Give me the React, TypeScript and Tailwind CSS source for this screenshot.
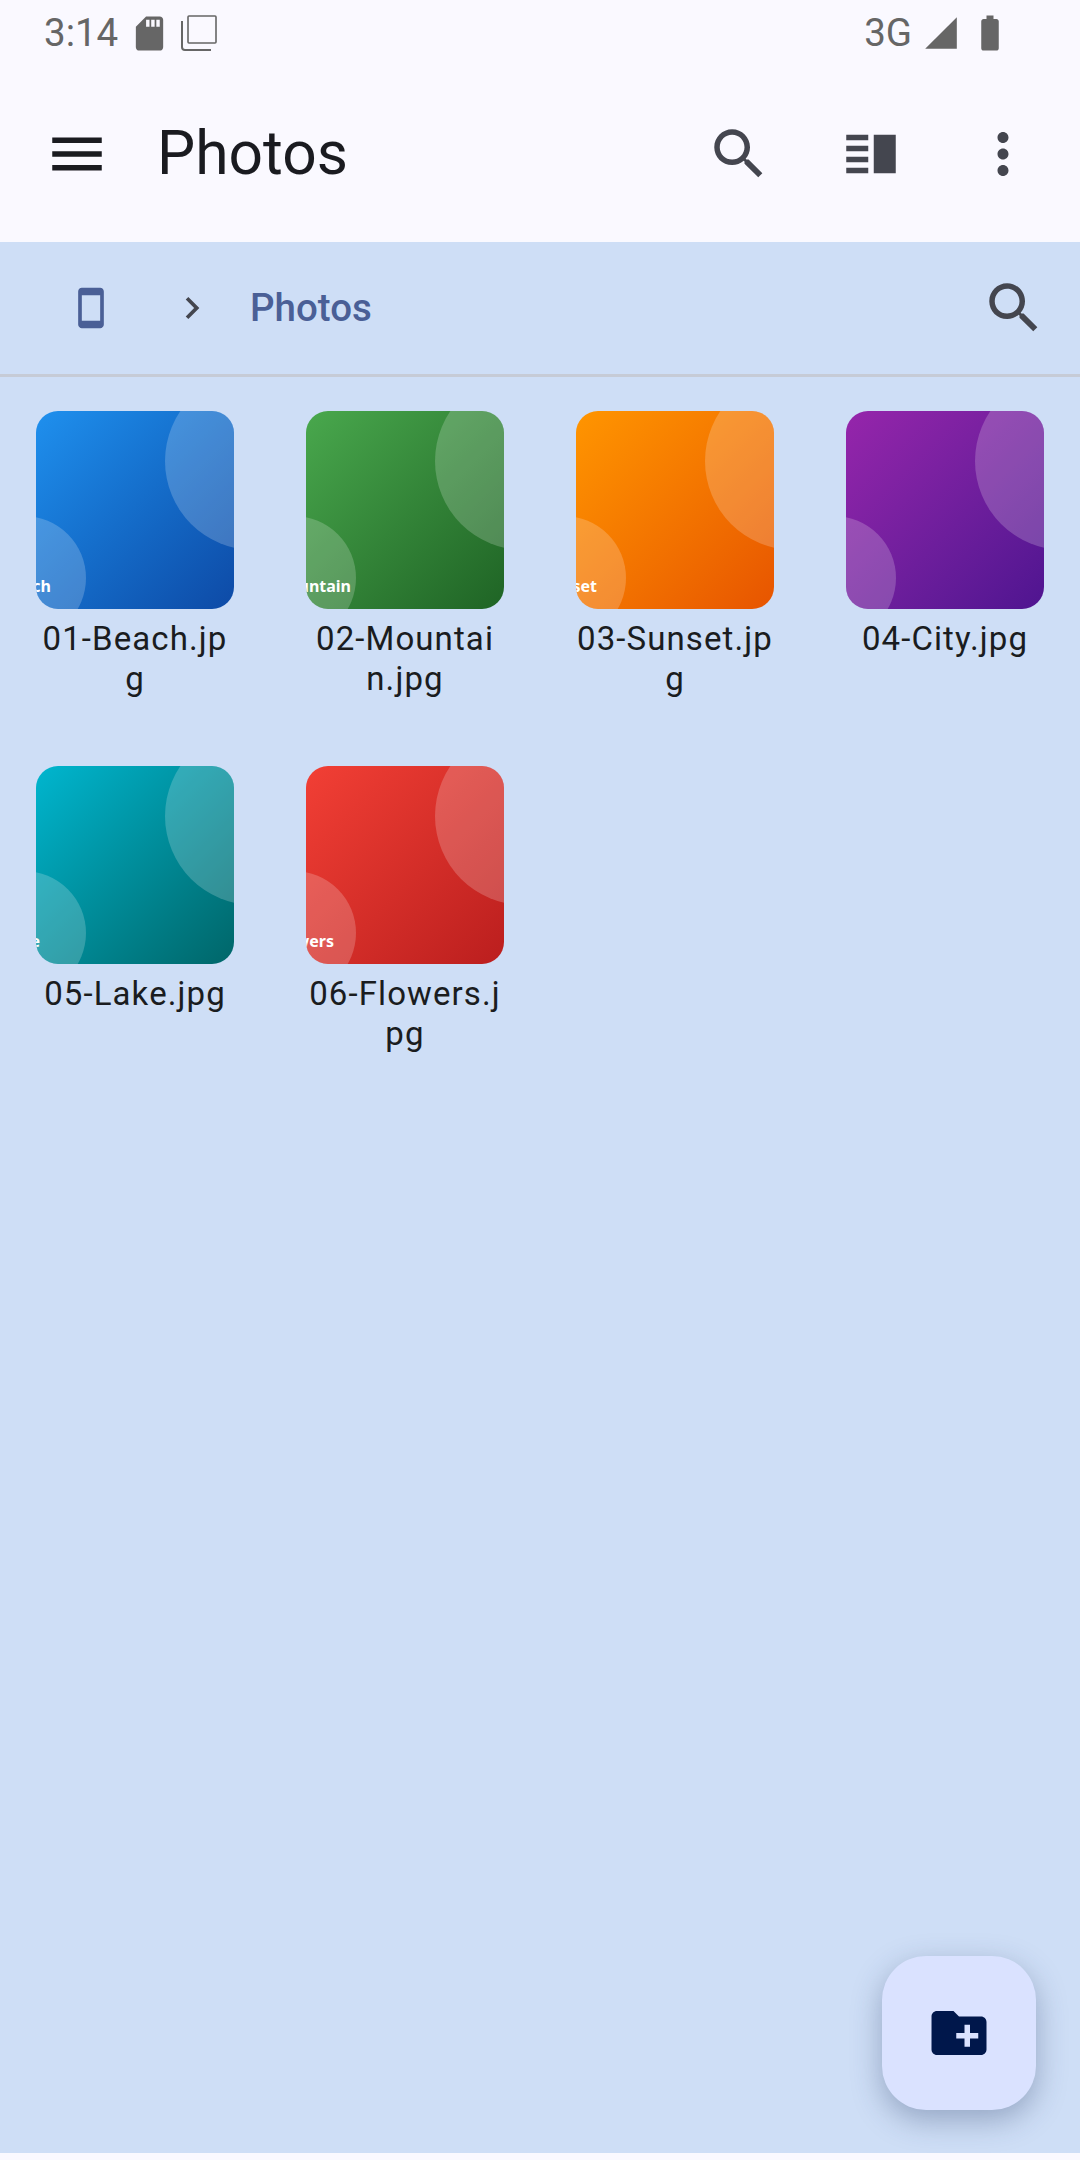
const P = {
  search: "M15.5 14h-.79l-.28-.27C15.41 12.59 16 11.11 16 9.5 16 5.91 13.09 3 9.5 3S3 5.91 3 9.5 5.91 16 9.5 16c1.61 0 3.09-.59 4.23-1.57l.27.28v.79l5 4.99L20.49 19l-4.99-5zm-6 0C7.01 14 5 11.99 5 9.5S7.01 5 9.5 5 14 7.01 14 9.5 11.99 14 9.5 14z",
  menu: "M3 18h18v-2H3v2zm0-5h18v-2H3v2zm0-7v2h18V6H3z",
  split: "M3 15h8v-2H3v2zm0 4h8v-2H3v2zm0-8h8V9H3v2zm0-6v2h8V5H3zm10 0h8v14h-8V5z",
  dots: "M12 8c1.1 0 2-.9 2-2s-.9-2-2-2-2 .9-2 2 .9 2 2 2zm0 2c-1.1 0-2 .9-2 2s.9 2 2 2 2-.9 2-2-.9-2-2-2zm0 6c-1.1 0-2 .9-2 2s.9 2 2 2 2-.9 2-2-.9-2-2-2z",
  phone: "M17 1.01L7 1c-1.1 0-2 .9-2 2v18c0 1.1.9 2 2 2h10c1.1 0 2-.9 2-2V3c0-1.1-.9-1.99-2-1.99zM17 19H7V5h10v14z",
  chevron: "M10 6L8.59 7.41 13.17 12l-4.58 4.59L10 18l6-6z",
  folder: "M20 6h-8l-2-2H4c-1.11 0-1.99.89-1.99 2L2 18c0 1.11.89 2 2 2h16c1.11 0 2-.9 2-2V8c0-1.11-.89-2-2-2zm-1 8h-3v3h-2v-3h-3v-2h3V9h2v3h3v2z",
  sd: "M18 2h-8L4.02 8 4 20c0 1.1.9 2 2 2h12c1.1 0 2-.9 2-2V4c0-1.1-.9-2-2-2zm-6 6h-2V4h2v4zm3 0h-2V4h2v4zm3 0h-2V4h2v4z",
  signal: "M2 22h20V2z",
  battery: "M15.67 4H14V2h-4v2H8.33C7.6 4 7 4.6 7 5.33v15.33C7 21.4 7.6 22 8.33 22h7.33c.74 0 1.34-.6 1.34-1.33V5.33C17 4.6 16.4 4 15.67 4z",
};

function Icon({ d, className }: { d: string; className: string }) {
  return (
    <svg viewBox="0 0 24 24" className={className} fill="currentColor">
      <path d={d} />
    </svg>
  );
}

function IconButton({ d, color = "text-[#44464f]" }: { d: string; color?: string }) {
  return (
    <div className={`flex h-[132px] w-[132px] items-center justify-center ${color}`}>
      <Icon d={d} className="h-[66px] w-[66px]" />
    </div>
  );
}

const files = [
  { name: "01-Beach.jpg", tag: "Beach", grad: "from-[#1f90ee] to-[#0e4aa6]", tagPos: "right-[183px]" },
  { name: "02-Mountain.jpg", tag: "Mountain", grad: "from-[#49a84d] to-[#1f6425]", tagPos: "right-[153px]" },
  { name: "03-Sunset.jpg", tag: "Sunset", grad: "from-[#ff9500] to-[#e75400]", tagPos: "right-[177px]" },
  { name: "04-City.jpg", tag: "", grad: "from-[#9625ab] to-[#4f1490]", tagPos: "right-[198px]" },
  { name: "05-Lake.jpg", tag: "Lake", grad: "from-[#00b6cf] to-[#006669]", tagPos: "right-[194px]" },
  { name: "06-Flowers.jpg", tag: "Flowers", grad: "from-[#f23f35] to-[#bb1e1e]", tagPos: "right-[170px]" },
];

function FileCell({ f }: { f: (typeof files)[number] }) {
  return (
    <div className="flex h-[355px] flex-col items-center px-[36px] pt-[34px]">
      <div className={`relative h-[198px] w-[198px] shrink-0 overflow-hidden rounded-[22px] bg-gradient-to-br ${f.grad}`}>
        <div className="absolute left-[129px] top-[-39px] h-[178px] w-[178px] rounded-full bg-white/20" />
        <div className="absolute left-[-74px] top-[105px] h-[124px] w-[124px] rounded-full bg-white/20" />
        {f.tag && (
          <span className={`absolute top-[165px] whitespace-nowrap font-['Noto_Sans',sans-serif] text-[16px] font-bold leading-[20px] text-white ${f.tagPos}`}>
            {f.tag}
          </span>
        )}
      </div>
      <div className="mt-[10px] w-[200px] break-all text-center text-[33px] leading-[40px] tracking-[1.1px] text-[#1a1c20]">
        {f.name}
      </div>
    </div>
  );
}

export default function App() {
  return (
    <div className="flex h-[2160px] w-[1080px] flex-col overflow-hidden bg-[#faf9ff] font-['Roboto',sans-serif]">
      {/* status bar */}
      <div className="flex h-[66px] shrink-0 items-center pl-[44px] pr-[69px] text-[#666666]">
        <span className="text-[38.5px] leading-[66px]">3:14</span>
        <Icon d={P.sd} className="ml-[11px] h-[41px] w-[41px]" />
        <svg viewBox="0 0 36 36" className="ml-[11px] h-[36px] w-[36px]" fill="none" stroke="currentColor" strokeWidth="1.6">
          <rect x="7" y="1" width="28" height="27" rx="1" />
          <path d="M1 6v26a3 3 0 0 0 3 3h26" strokeWidth="2" />
        </svg>
        <span className="ml-auto text-[38.5px] leading-[66px]">3G</span>
        <Icon d={P.signal} className="ml-[10px] h-[38px] w-[38px]" />
        <Icon d={P.battery} className="ml-[9px] h-[42px] w-[42px]" />
      </div>

      {/* toolbar */}
      <div className="flex h-[176px] shrink-0 items-center pl-[11px] pr-[11px]">
        <IconButton d={P.menu} color="text-[#1a1b20]" />
        <span className="ml-[14px] text-[60.5px] leading-[80px] text-[#1a1b20]">Photos</span>
        <div className="ml-auto flex">
          <IconButton d={P.search} />
          <IconButton d={P.split} />
          <IconButton d={P.dots} />
        </div>
      </div>

      {/* content */}
      <div className="relative flex min-h-0 flex-1 flex-col bg-[#cedef6]">
        <div className="flex h-[135px] shrink-0 items-center border-b-[3px] border-[#c6cbd6]">
          <Icon d={P.phone} className="ml-[69px] h-[44px] w-[44px] text-[#4a5f96]" />
          <Icon d={P.chevron} className="ml-[57px] h-[44px] w-[44px] text-[#44464f]" />
          <span className="ml-[36px] text-[38.5px] font-medium leading-[50px] text-[#4a5f96]">Photos</span>
          <div className="ml-auto">
            <IconButton d={P.search} />
          </div>
        </div>
        <div className="grid grid-cols-4">
          {files.map((f) => (
            <FileCell key={f.name} f={f} />
          ))}
        </div>
        <div className="absolute bottom-[43px] right-[44px] flex h-[154px] w-[154px] items-center justify-center rounded-[44px] bg-[#dae2ff] text-[#00174b] shadow-[0_10px_30px_rgba(40,60,100,0.35)]">
          <Icon d={P.folder} className="h-[66px] w-[66px]" />
        </div>
      </div>

      {/* bottom strip */}
      <div className="h-[7px] shrink-0 bg-[#faf9ff]" />
    </div>
  );
}
